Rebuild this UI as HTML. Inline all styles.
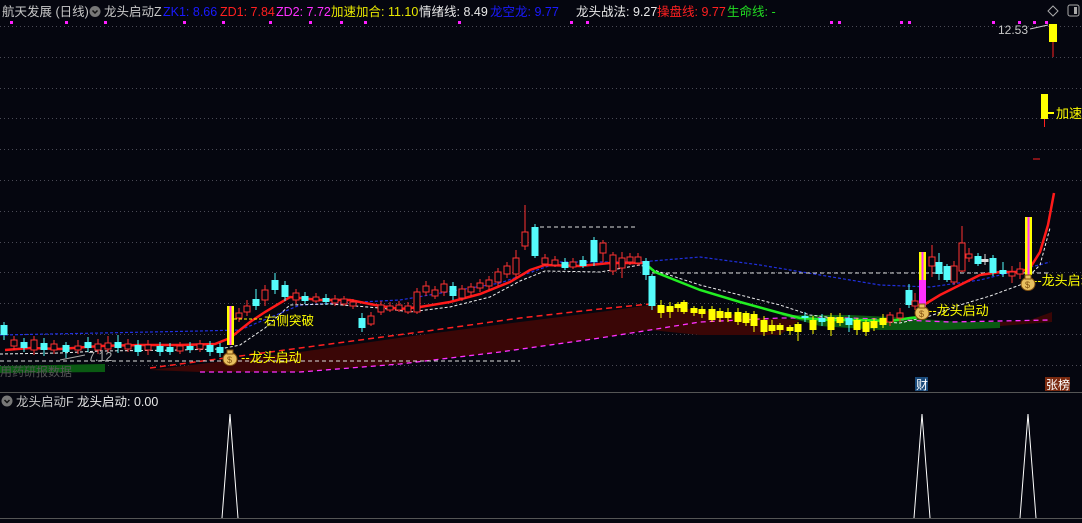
<!DOCTYPE html>
<html><head><meta charset="utf-8"><style>
html,body{margin:0;padding:0;background:#05060f;width:1082px;height:523px;overflow:hidden}
svg{display:block;font-family:"Liberation Sans","Noto Sans CJK SC",sans-serif}
</style></head><body>
<svg id="s" width="1082" height="523" viewBox="0 0 1082 523" xmlns="http://www.w3.org/2000/svg">
<rect width="1082" height="523" fill="#05060f"/>
<g id="grid" stroke="#4a4a55" stroke-width="1" stroke-dasharray="1,3"></g>
<line x1="0" y1="392.5" x2="1082" y2="392.5" stroke="#555" stroke-width="1"/>
<line x1="0" y1="518.5" x2="1082" y2="518.5" stroke="#555" stroke-width="1"/>
<path d="M150,370 L300,352 L420,335 L520,322 L600,312 L650,305 L700,310 L760,318 L800,320 L780,335 L700,335 L650,330 L600,338 L500,352 L400,364 L300,372 L200,372 Z" fill="#3a0606"/>
<path d="M0,366 L105,364 L105,372 L0,373 Z" fill="#0a5a12"/>
<path d="M780,315 L850,315 L910,318 L960,322 L1000,322 L1000,328 L940,330 L880,330 L820,326 Z" fill="#0a5a12"/>
<path d="M1000,322 L1030,320 L1052,312 L1052,322 L1000,326 Z" fill="#3a0606"/>
<path d="M150,368 L300,348 L420,332 L520,318 L600,309 L650,304" fill="none" stroke="#ff2020" stroke-width="1.5" stroke-dasharray="6,4"/>
<path d="M200,372 L300,372 L400,364 L500,352 L600,338 L650,330 L700,322 L780,318 L850,318 L950,322 L1050,320" fill="none" stroke="#ff30ff" stroke-width="1.3" stroke-dasharray="5,4"/>
<path d="M0,335 L100,333 L200,331 L240,330 L300,305 L400,300 L500,283 L560,262 L640,262 L700,257 L760,265 L820,275 L880,285 L930,287 L980,280 L1020,270 L1050,262" fill="none" stroke="#2030e0" stroke-width="1.2" stroke-dasharray="3,2"/>
<path d="M0,361 L520,361" stroke="#ddd" stroke-width="1" stroke-dasharray="4,3"/>
<path d="M540,227 L637,227" stroke="#ddd" stroke-width="1" stroke-dasharray="4,3"/>
<path d="M652,273 L1050,273" stroke="#ddd" stroke-width="1" stroke-dasharray="4,3"/>
<path d="M0,354 L60,353 L100,351 L180,350 L220,349 L240,345 L265,328 L290,305 L330,304 L380,308 L410,312 L450,307 L490,297 L520,281 L545,271 L600,272 L640,265 L660,272 L700,285 L740,295 L780,305 L810,315 L850,320 L900,323 L930,316 L960,305 L990,296 L1020,285 L1040,265 L1050,228" fill="none" stroke="#eee" stroke-width="1" stroke-dasharray="3,2"/>
<path d="M5,350 L30,348 L60,349 L100,346 L140,345 L180,345 L215,344 L230,338 L250,322 L265,312 L290,297 L320,300 L350,300 L375,305 L400,309 L420,307 L450,302 L480,294 L510,282 L530,270 L545,265 L580,266 L610,263 L645,263" fill="none" stroke="#ff1a1a" stroke-width="2.5"/>
<path d="M648,266 L655,272 L700,290 L740,302 L780,313 L800,318 L830,320 L860,320 L890,321 L910,318 L920,317" fill="none" stroke="#22ee22" stroke-width="2.5"/>
<path d="M922,306 L940,295 L960,285 L980,275 L1000,272 L1020,272 L1030,268 L1040,252 L1048,225 L1054,193" fill="none" stroke="#ff1a1a" stroke-width="2.5"/>
<g id="candles"></g>
<rect x="227" y="306" width="2.5" height="39" fill="#ffff00"/><rect x="229.5" y="306" width="2" height="39" fill="#ff30ff"/><rect x="231.5" y="306" width="2.5" height="39" fill="#ffff00"/>
<rect x="919" y="252" width="2.5" height="28" fill="#ffff00"/><rect x="921.5" y="252" width="2" height="66" fill="#ff30ff"/><rect x="923.5" y="252" width="2.5" height="28" fill="#ffff00"/><rect x="919" y="280" width="7" height="38" fill="#ff30ff"/>
<rect x="1025" y="217" width="2.5" height="58" fill="#ffff00"/><rect x="1027.5" y="217" width="2" height="58" fill="#ff30ff"/><rect x="1029.5" y="217" width="2.5" height="58" fill="#ffff00"/>
<rect x="1049" y="24" width="8" height="18" fill="#ffff00"/><line x1="1053" y1="42" x2="1053" y2="57" stroke="#ff2020"/>
<rect x="1041" y="94" width="7" height="25" fill="#ffff00"/><line x1="1044.5" y1="119" x2="1044.5" y2="127" stroke="#ff2020"/><line x1="1048" y1="113" x2="1054" y2="113" stroke="#ffff00" stroke-width="2"/>
<line x1="1033" y1="159" x2="1040" y2="159" stroke="#ff2020"/>
<text x="1056" y="118" font-size="13" fill="#ffff00">加速</text>
<text x="998" y="34" font-size="12" fill="#c8c8c8">12.53</text>
<path d="M1030,29 L1048,25" stroke="#ccc" stroke-width="1"/>
<path d="M1053,6 L1058,11 L1053,16 L1048,11 Z" fill="none" stroke="#aaa"/>
<rect x="1068" y="5" width="11" height="11" rx="2" fill="none" stroke="#aaa"/><rect x="1074" y="7" width="3" height="7" fill="#aaa"/>
<line x1="234" y1="319" x2="262" y2="319" stroke="#ffff00" stroke-dasharray="3,2"/>
<text x="264" y="325" font-size="12.5" fill="#ffff00">右侧突破</text>
<line x1="60" y1="360" x2="85" y2="355" stroke="#aaa"/>
<text x="88" y="361" font-size="12.5" fill="#aaa">7.12</text>
<text x="0" y="376" font-size="12" fill="#555">用药研报数据</text>
<g font-size="13" fill="#ffff00">
<text x="241" y="362">--龙头启动</text>
<text x="928" y="315">--龙头启动</text>
<text x="1033" y="285">--龙头启动</text>
</g>
<g id="bags"></g>
<rect x="915" y="377" width="13" height="14" fill="#1a4a7a"/><text x="916" y="389" font-size="12" fill="#fff">财</text>
<rect x="1045" y="377" width="25" height="14" fill="#7a2a10"/><text x="1046" y="389" font-size="12" fill="#fff">张榜</text>
<g font-size="12.5">
<text x="2" y="16" fill="#c8c8c8">航天发展 (日线)</text>
<circle cx="95" cy="11.5" r="5.5" fill="#777"/><path d="M92.5,10.5 L95,13 L97.5,10.5" stroke="#111" fill="none" stroke-width="1.5"/>
<text x="104" y="16" fill="#c8c8c8">龙头启动Z</text>
<text x="163" y="16" fill="#1a1aff">ZK1: 8.66</text>
<text x="220" y="16" fill="#ff2020">ZD1: 7.84</text>
<text x="276" y="16" fill="#ff30ff">ZD2: 7.72</text>
<text x="331" y="16" fill="#e8e800">加速加合: 11.10</text>
<text x="419" y="16" fill="#e8e8e8">情绪线: 8.49</text>
<text x="490" y="16" fill="#1a1aff">龙空龙: 9.77</text>
<text x="576" y="16" fill="#e8e8e8">龙头战法: 9.27</text>
<text x="657" y="16" fill="#ff2020">操盘线: 9.77</text>
<text x="727" y="16" fill="#22dd22">生命线: -</text>
</g>
<g id="dots" fill="#ff20ff"></g>
<circle cx="7" cy="401" r="5.5" fill="#777"/><path d="M4.5,400 L7,402.5 L9.5,400" stroke="#111" fill="none" stroke-width="1.5"/>
<text x="16" y="406" font-size="12.5" fill="#c8c8c8">龙头启动F</text>
<text x="77" y="406" font-size="12.5" fill="#e8e8e8">龙头启动: 0.00</text>
<path d="M222,518 L230,414 L238,518 M914,518 L922,414 L930,518 M1020,518 L1028,414 L1036,518" fill="none" stroke="#fff" stroke-width="1"/>
</svg>
<script>
var NS="http://www.w3.org/2000/svg";
function el(t,a,p){var e=document.createElementNS(NS,t);for(var k in a)e.setAttribute(k,a[k]);document.getElementById(p).appendChild(e);return e;}
[26,57,88,118,149,180,211,242,272,303,334,365].forEach(function(y){el('line',{x1:0,y1:y+.5,x2:1082,y2:y+.5},'grid');});
[10,65,104,183,222,269,309,340,364,458,570,586,830,838,900,908,992,1018,1033,1045].forEach(function(x){el('rect',{x:x,y:21,width:3,height:3},'dots');});
[[230,358],[922,312],[1028,283]].forEach(function(p){var g=document.createElementNS(NS,'g');g.innerHTML='<ellipse cx="'+p[0]+'" cy="'+(p[1]+1)+'" rx="7" ry="6.5" fill="#e8c060" stroke="#805010"/><rect x="'+(p[0]-3)+'" y="'+(p[1]-8)+'" width="6" height="4" fill="#e8c060" stroke="#805010"/><text x="'+(p[0]-3)+'" y="'+(p[1]+5)+'" font-size="9" fill="#805010">$</text>';document.getElementById('bags').appendChild(g);});
var C=[[4,325,335,322,340,'c'],[14,340,346,336,350],[24,342,348,338,352,'c'],[34,340,350,336,355],[44,343,350,338,356,'c'],[54,344,350,340,354],[66,345,352,342,358,'c'],[78,346,350,340,354],[88,342,348,337,352,'c'],[98,344,350,339,354],[108,343,349,336,353],[118,342,348,335,353,'c'],[128,344,349,339,352],[138,345,352,340,356,'c'],[148,345,350,340,355],[160,346,352,342,356,'c'],[170,347,352,343,355,'c'],[180,346,351,342,354],[190,346,350,342,353,'c'],[200,344,349,340,352],[210,345,352,341,356,'c'],[220,347,353,343,357,'c'],
[239,313,318,308,322],[247,306,312,300,316],[256,299,306,289,310,'c'],[265,290,300,285,306],[275,280,290,273,294,'c'],[285,285,297,281,301,'c'],[296,293,300,289,304],[305,296,301,292,304,'c'],[316,297,301,293,303],[326,298,302,294,305,'c'],[335,299,303,295,306],[344,299,304,296,306],[353,302,306,299,309],[362,318,328,313,332,'c'],[371,316,324,312,326],[381,305,312,301,315],[390,306,310,302,312],[399,305,310,301,312],[408,306,312,302,314],[417,292,312,288,314],[426,286,292,281,296],[435,290,296,286,299],[444,284,292,280,296],[453,286,296,282,300,'c'],[462,289,298,285,301],[471,287,292,283,296],[480,283,288,279,292],[489,280,286,276,290],[498,272,282,268,286],[507,266,274,262,278],[516,258,274,250,278],[525,232,246,205,250],[535,227,256,224,258,'c'],[545,258,264,254,266],[555,260,265,256,267],[565,262,268,258,270,'c'],[573,262,267,258,269],[583,260,266,256,268,'c'],[594,240,262,237,266,'c'],[603,243,253,240,262],[613,255,271,252,275],[622,258,268,252,278],[630,257,262,253,265],[638,257,263,253,266],[646,261,275,258,280,'c'],[652,276,306,274,310,'c'],
[661,305,313,300,318,'y'],[670,306,312,302,318,'y'],[678,304,308,302,312,'y'],[684,302,312,300,314,'y'],[694,308,313,306,316,'y'],[702,309,314,306,318,'y'],[712,309,320,306,322,'y'],[720,311,318,308,322,'y'],[728,312,318,308,322,'y'],[738,312,322,308,325,'y'],[746,313,323,311,326,'y'],[754,314,326,311,332,'y'],[764,320,332,316,336,'y'],[772,325,331,320,334,'y'],[780,325,330,323,335,'y'],[790,327,331,325,335,'y'],[798,324,332,322,341,'y'],[805,316,318,312,322,'c'],[813,320,330,316,334,'y'],[822,318,322,314,326,'c'],[831,317,330,313,336,'y'],[840,317,323,313,326,'y'],[849,318,325,315,332,'c'],[857,320,330,318,335,'y'],[866,322,332,320,336,'y'],[874,321,328,318,331,'y'],[883,318,325,314,328,'y'],[890,315,322,312,326],[900,313,318,308,322],[909,290,305,284,308,'c'],[915,301,306,293,310],[932,257,266,245,277],[939,262,274,253,280,'c'],[947,266,280,264,282,'c'],[954,266,282,261,285],[962,243,271,226,272],[969,254,258,248,262],[978,256,264,253,266,'c'],[985,259,262,254,265,'w'],[993,258,273,255,276,'c'],[1003,270,274,262,277,'c'],[1012,272,276,266,283],[1020,269,274,262,279]];
C.forEach(function(c){var x=c[0],o=c[1],cl=c[2],h=c[3],l=c[4],t=c[5];var col=t=='c'?'#54fcfc':t=='y'?'#ffff00':t=='w'?'#ddd':'#ff3232';var wk=t=='y'?'#ffff00':col;
el('line',{x1:x,y1:h,x2:x,y2:l,stroke:wk,'stroke-width':1},'candles');
if(t)el('rect',{x:x-3.5,y:o,width:7,height:Math.max(1,cl-o),fill:col},'candles');
else el('rect',{x:x-3,y:o,width:6,height:Math.max(1,cl-o),fill:'#05060f',stroke:col,'stroke-width':1},'candles');});
</script>
</body></html>
